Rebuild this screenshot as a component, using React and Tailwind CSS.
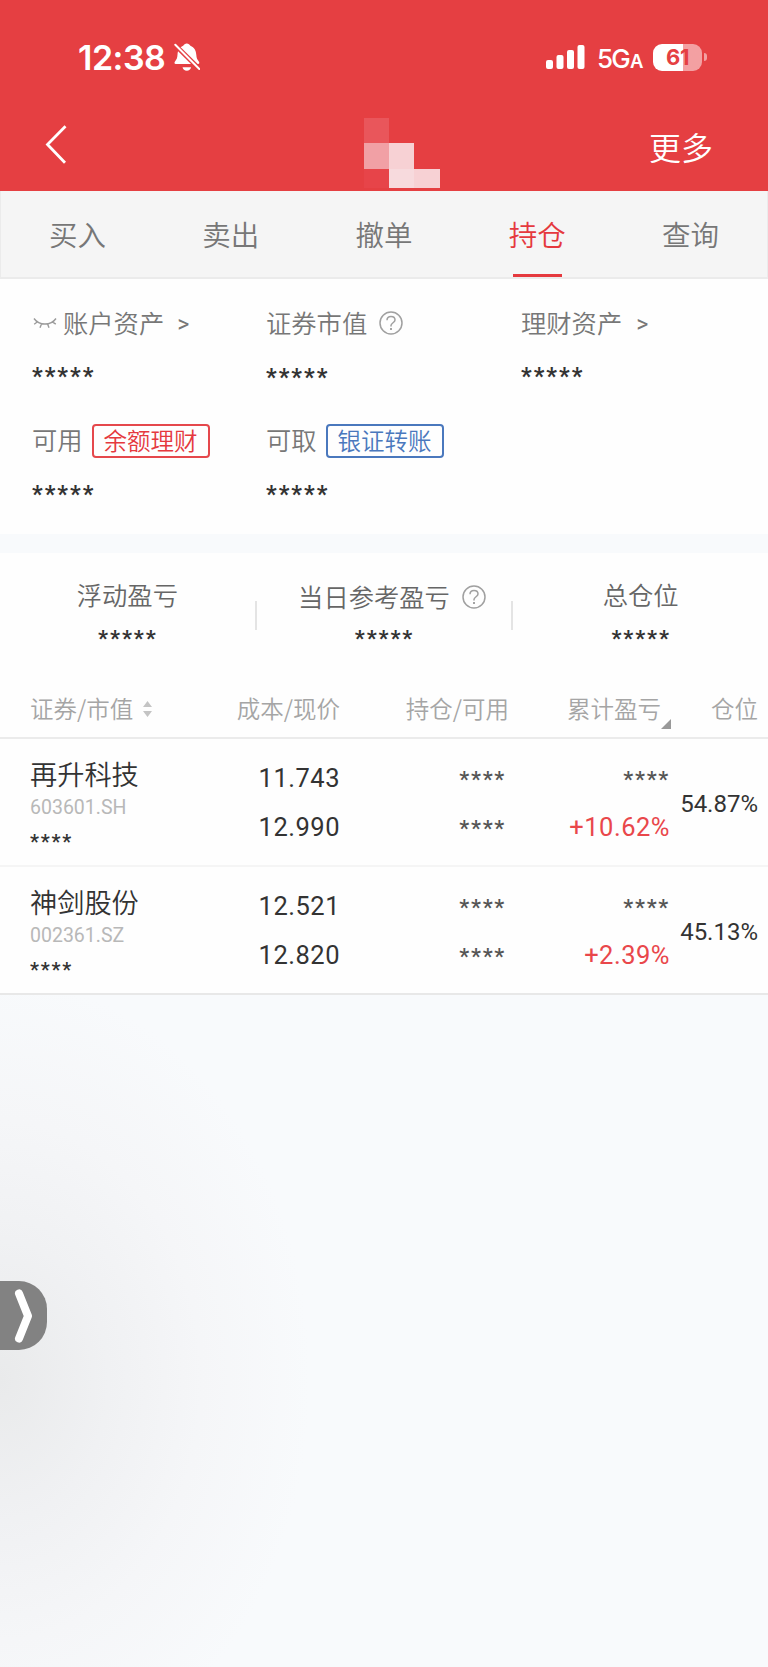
import { clsx } from "clsx";

const tabs = ["买入", "卖出", "撤单", "持仓", "查询"];

const holdings = [
  {
    name: "再升科技",
    code: "603601.SH",
    cost: "11.743",
    price: "12.990",
    rate: "+10.62%",
    position: "54.87%",
  },
  {
    name: "神剑股份",
    code: "002361.SZ",
    cost: "12.521",
    price: "12.820",
    rate: "+2.39%",
    position: "45.13%",
  },
];

function HelpIcon() {
  return (
    <svg className="h-6 w-6 shrink-0" viewBox="0 0 24 24" fill="none" stroke="#a0a0a0" strokeWidth="1.5">
      <circle cx="12" cy="12" r="11" />
      <path d="M8 9.300c0-2.300 1.600-3.900 4-3.900s4 1.500 4 3.500c0 2.700-4 3-4 5.700v.8" />
      <path d="M12 17v2" strokeWidth="1.9" />
    </svg>
  );
}

function ClosedEyeIcon() {
  return (
    <svg className="ml-[1px] h-3 w-6 shrink-0" viewBox="0 0 24 12" fill="none" stroke="#9b9b9b" strokeWidth="1.4">
      <path d="M1 1.500C3.500 5 7 7 12 7s8.500-2 11-5.500M4.500 4.800 1.200 7.200M8.600 6.700 7 10.700M14.500 6.700 16 10.700M19.300 4.800 22.800 7.200" />
    </svg>
  );
}

function BellOffIcon() {
  return (
    <svg className="ml-[9px] h-7 w-[26px]" viewBox="0 0 26 28" fill="white">
      <path d="M12.800 0.500c1.600 0 3 1 3.600 2.300 4 1.500 5.600 5 5.900 9 .2 3.200 1 5 2.500 6.600.7.800.9 2.600-.8 2.600H1.800c-1.700 0-1.500-1.800-.8-2.600 1.500-1.600 2.300-3.400 2.500-6.600.3-4 1.700-7.500 5.700-9C9.800 1.500 11.200.5 12.800.5z" />
      <path d="M8.500 24.200h8.600c-.5 2.100-2.100 3.500-4.300 3.500s-3.800-1.400-4.300-3.500z" />
      <path d="M.5 1.500 26 26.500" stroke="#e53f42" strokeWidth="4.800" />
      <path d="M1.300 1.800 25.300 26" stroke="white" strokeWidth="2" strokeLinecap="round" />
    </svg>
  );
}

function StatusBar() {
  return (
    <div className="flex h-[114px] items-center justify-between pr-[61px] pl-[78px] text-white">
      <div className="flex items-center">
        <span className="mt-[2px] font-[Inter] text-[34px] leading-none font-semibold tracking-[-0.500px]">12:38</span>
        <BellOffIcon />
      </div>
      <div className="flex items-center">
        <svg className="h-6 w-[39px]" viewBox="0 0 39 24" fill="white">
          <rect x="0" y="15" width="7" height="9" rx="2" />
          <rect x="10.500" y="10" width="7" height="14" rx="2" />
          <rect x="21" y="5" width="7" height="19" rx="2" />
          <rect x="31.500" y="0" width="7" height="24" rx="2" />
        </svg>
        <span className="mt-[3px] ml-[12px] flex w-[45px] items-baseline font-[Inter] leading-none font-medium">
          <span className="text-[26px] tracking-[-1.800px]">5G</span>
          <span className="ml-[1px] text-[18.500px] font-semibold">A</span>
        </span>
        <div className="ml-[11px] flex h-[27px] w-[49px] items-center justify-center rounded-[9px] bg-linear-to-r from-white from-62% to-[#f3a0a2] to-62% font-[Inter] text-[22px] leading-none font-bold tracking-[-0.500px] text-[#e53f42]">
          61
        </div>
        <div className="ml-[2px] h-2 w-[3px] rounded-r-full bg-[#f3a0a2]" />
      </div>
    </div>
  );
}

function NavBar() {
  return (
    <div className="flex h-[77px] items-start justify-between pr-[55px] pl-[45px]">
      <svg className="mt-[11px] h-[39px] w-[22px]" viewBox="0 0 22 39" fill="none" stroke="white" strokeWidth="2.800">
        <path d="M20.500 1.300 2.500 19.500l17.500 18.200" />
      </svg>
      <div className="mt-1 ml-[88px] grid grid-cols-[25px_25px_26px] grid-rows-[25px_26px_19px]">
        <div className="bg-[#e9565b]" />
        <div />
        <div />
        <div className="bg-[#f1a0a5]" />
        <div className="bg-[#f7d1d4]" />
        <div />
        <div className="bg-[#e74449]" />
        <div className="bg-[#f7dadd]" />
        <div className="bg-[#f7d1d4]" />
      </div>
      <span className="mt-[9px] text-[32px] leading-[46px] text-white">更多</span>
    </div>
  );
}

function Stars({ count = 5, className }) {
  return <div className={clsx("font-[Roboto]", className)}>{"*".repeat(count)}</div>;
}

function Asset({ label, children }) {
  return (
    <div>
      <div className="flex h-9 items-center text-[25.300px] whitespace-nowrap text-[#777]">{label}</div>
      {children}
    </div>
  );
}

function AssetPanel() {
  const stars = "mt-[17px] h-9 text-[23.500px] leading-9 font-bold tracking-[2px] text-[#333]";
  return (
    <section className="grid h-[255px] grid-cols-[234px_255px_1fr] grid-rows-[118px_1fr] bg-[#fefefe] pt-[26px] pl-8">
      <Asset
        label={
          <>
            <ClosedEyeIcon />
            <span className="ml-[6px]">账户资产</span>
            <span className="mt-[5px] ml-[13px] font-[Roboto] text-[23px] font-normal">&gt;</span>
          </>
        }
      >
        <Stars className={stars} />
      </Asset>
      <Asset
        label={
          <>
            <span className="mr-3">证券市值</span>
            <HelpIcon />
          </>
        }
      >
        <Stars className={clsx(stars, "pt-[1px]")} />
      </Asset>
      <Asset
        label={
          <>
            理财资产<span className="mt-[5px] ml-[14px] font-[Roboto] text-[23px] font-normal">&gt;</span>
          </>
        }
      >
        <Stars className={stars} />
      </Asset>
      <Asset
        label={
          <>
            <span className="-mt-[2px]">可用</span>
            <button className="ml-[9px] flex h-[34px] w-[118px] items-center justify-center rounded-[4px] border-2 border-[#e5484c] text-[23.500px] leading-none text-[#e5393e]">
              余额理财
            </button>
          </>
        }
      >
        <Stars className={stars} />
      </Asset>
      <Asset
        label={
          <>
            <span className="-mt-[2px]">可取</span>
            <button className="ml-[9px] flex h-[34px] w-[118px] items-center justify-center rounded-[4px] border-2 border-[#4a78bd] text-[23.500px] leading-none text-[#4a78bd]">
              银证转账
            </button>
          </>
        }
      >
        <Stars className={stars} />
      </Asset>
    </section>
  );
}

function Summary({ label, help }) {
  return (
    <div className="flex flex-1 flex-col items-center">
      <div className={clsx("flex h-9 items-center gap-3 text-[25.300px] whitespace-nowrap text-[#666]", help && "mt-[2px] -mb-[2px] ml-4")}>
        {label}
        {help && <HelpIcon />}
      </div>
      <Stars className="mt-2 ml-[1px] text-[22px] leading-9 font-bold tracking-[1.900px] text-[#333]" />
    </div>
  );
}

function SummaryPanel() {
  return (
    <section className="flex h-[130px] bg-[#fefefe] pt-6">
      <Summary label="浮动盈亏" />
      <div className="mt-6 h-[29px] w-[2px] bg-[#e4e4e4]" />
      <Summary label="当日参考盈亏" help />
      <div className="mt-6 h-[29px] w-[2px] bg-[#e4e4e4]" />
      <Summary label="总仓位" />
    </section>
  );
}

const columns = "grid grid-cols-[180px_130px_169px_161px_88px] pl-[30px]";

function TableHeader() {
  return (
    <div className={clsx(columns, "h-14 border-b-2 border-[#ebebeb] pt-[5px] text-right text-[23.500px] leading-10 whitespace-nowrap text-[#a5a5a5]")}>
      <div className="flex h-10 items-center">
        证券/市值
        <svg className="mt-[2px] ml-[10px] h-4 w-[9px]" viewBox="0 0 9 16" fill="#c4c4c4">
          <path d="M4.500 0 9 6H0zM4.500 16 0 10h9z" />
        </svg>
      </div>
      <div>成本/现价</div>
      <div>持仓/可用</div>
      <div className="relative h-10 pr-[9px]">
        累计盈亏
        <svg className="absolute right-[-1px] bottom-[-1px] h-[10px] w-[10px]" viewBox="0 0 10 10" fill="#999">
          <path d="M10 0v10H0z" />
        </svg>
      </div>
      <div>仓位</div>
    </div>
  );
}

function HoldingRow({ item, last }) {
  const stars = "pt-[1px] -mb-[1px] text-[22.500px] font-medium tracking-[1.700px] text-[#555]";
  return (
    <div
      className={clsx(
        columns,
        "h-32 border-b-2 bg-[#fefefe] text-right font-[Roboto,'Noto_Sans_CJK_SC'] text-[25.500px] leading-[49px] font-normal text-[#333]",
        last ? "border-[#e8e8e8]" : "border-[#f5f5f5]",
      )}
    >
      <div className="pt-[14px] text-left">
        <div className="font-['Noto_Sans_CJK_SC'] text-[27.200px] leading-10 font-[350]">{item.name}</div>
        <div className="mt-[3px] text-[19.500px] leading-6 text-[#b8b8b8]">{item.code}</div>
        <Stars count={4} className="mt-[5px] text-[20px] leading-[34px] font-semibold tracking-[1.800px]" />
      </div>
      <div className="pt-[15px] tracking-[0.500px]">
        <div>{item.cost}</div>
        <div>{item.price}</div>
      </div>
      <div className="pt-[15px] pr-[3px]">
        <Stars count={4} className={stars} />
        <Stars count={4} className={stars} />
      </div>
      <div className="pt-[15px]">
        <Stars count={4} className={stars} />
        <div className="tracking-[0.500px] text-[#e9474b]">{item.rate}</div>
      </div>
      <div className="pt-[41px] text-[24px]">{item.position}</div>
    </div>
  );
}

export default function App() {
  return (
    <main className="relative flex h-[1667px] w-[768px] flex-col overflow-hidden bg-[#f8fafc] font-['Noto_Sans_CJK_SC',sans-serif] font-[350]">
      <header className="h-[191px] bg-[#e53f42]">
        <StatusBar />
        <NavBar />
      </header>

      <nav className="flex h-[88px] border-x border-b-2 border-[#ebebeb] bg-[#f5f5f5] text-[28.500px] text-[#777]">
        {tabs.map((tab) => (
          <button key={tab} className={clsx("flex flex-1 flex-col items-center", tab === "持仓" && "text-[#e5393e]")}>
            <span className="mt-[22px] leading-[42px]">{tab}</span>
            {tab === "持仓" && <span className="mt-[19px] h-[3px] w-[49px] shrink-0 bg-[#e5393e]" />}
          </button>
        ))}
      </nav>

      <AssetPanel />
      <div className="h-[19px]" />
      <SummaryPanel />

      <section className="bg-[#fefefe]">
        <TableHeader />
        {holdings.map((item, i) => (
          <HoldingRow key={item.code} item={item} last={i === holdings.length - 1} />
        ))}
      </section>

      <div className="flex-1 bg-[radial-gradient(ellipse_310px_400px_at_0px_385px,#e9eaeb,#f0f1f3_35%,#f5f6f8_65%,#f8fafc)]" />

      {/* floating drawer handle on the left edge */}
      <button className="absolute top-[1281px] left-0 h-[69px] w-[47px] rounded-r-[28px] bg-[#828282]">
        <svg className="ml-[14px] h-[54px] w-5" viewBox="0 0 20 54" fill="none" stroke="white" strokeWidth="8" strokeLinecap="round" strokeLinejoin="round">
          <path d="M5 4.500 14 27 5 49.500" />
        </svg>
      </button>
    </main>
  );
}
